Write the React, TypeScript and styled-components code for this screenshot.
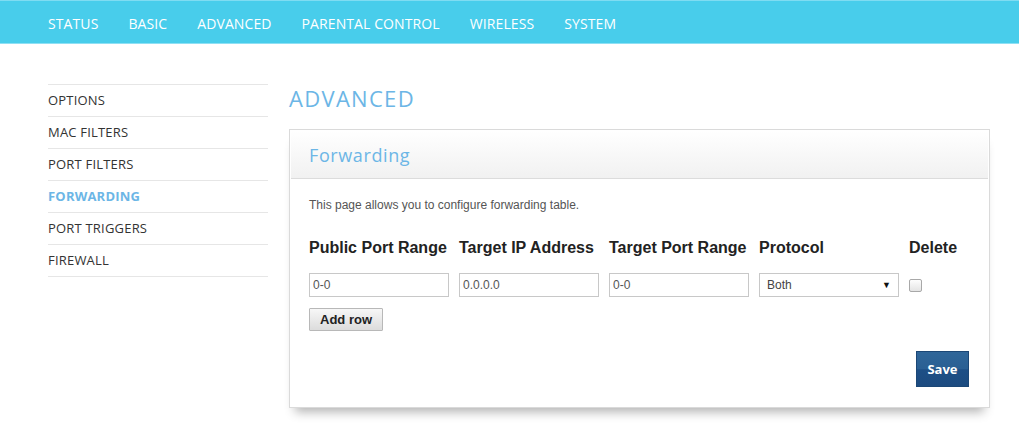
import * as React from "react";
import styled, { createGlobalStyle } from "styled-components";

const GlobalStyle = createGlobalStyle`
  html, body {
    margin: 0;
    padding: 0;
    background: #fff;
  }
  body {
    font-family: "Liberation Sans", Arial, sans-serif;
    color: #333;
    min-height: 447px;
  }
`;

const TopBar = styled.header`
  height: 44px;
  background: #48cdeb;
  border-top: 1px solid #7fdcf2;
  border-bottom: 1px solid #8fe0f4;
  box-sizing: border-box;
  display: flex;
  align-items: center;
  padding-left: 48px;
  gap: 30px;
`;

const NavLink = styled.a`
  font-family: "Open Sans", "Liberation Sans", sans-serif;
  font-size: 14px;
  color: #fff;
  text-decoration: none;
  letter-spacing: 0.1px;
  padding-top: 2px;
`;

const Page = styled.div`
  display: flex;
  padding: 40px 29px 30px 48px;
  gap: 21px;
  align-items: flex-start;
`;

const Sidebar = styled.ul`
  width: 220px;
  flex-shrink: 0;
  list-style: none;
  margin: 0;
  padding: 0;
  border-top: 1px solid #e6e6e6;
`;

const SideItem = styled.li<{ active?: boolean }>`
  box-sizing: border-box;
  height: 32px;
  padding-bottom: 1px;
  border-bottom: 1px solid #e6e6e6;
  display: flex;
  align-items: center;
  font-family: "Open Sans", "Liberation Sans", sans-serif;
  font-size: 13px;
  letter-spacing: 0.2px;
  font-weight: ${({ active }) => (active ? 700 : 400)};
  color: ${({ active }) => (active ? "#6cb6e6" : "#333")};
`;

const Main = styled.main`
  flex: 1;
`;

const Title = styled.h1`
  margin: 0;
  height: 45px;
  font-family: "Open Sans", "Liberation Sans", sans-serif;
  font-weight: 400;
  font-size: 22px;
  letter-spacing: 1.3px;
  line-height: 28px;
  color: #6cb6e6;
`;

const Panel = styled.section`
  position: relative;
  border: 1px solid #dadada;
  background: #fff;
  box-shadow: 0 10px 10px -6px rgba(0, 0, 0, 0.3);
`;

const PanelHead = styled.div`
  margin: 1px 1px 0;
  height: 47px;
  background: linear-gradient(to bottom, #ffffff, #f1f1f1);
  border-bottom: 1px solid #dcdcdc;
  display: flex;
  align-items: center;
  padding-left: 18px;
`;

const PanelTitle = styled.h2`
  margin: 0;
  font-family: "Open Sans", "Liberation Sans", sans-serif;
  font-weight: 400;
  font-size: 18px;
  letter-spacing: 0.6px;
  color: #6cb6e6;
`;

const PanelBody = styled.div`
  padding: 19px 20px 20px 19px;
`;

const Intro = styled.p`
  margin: 0 0 26px;
  font-size: 12px;
  line-height: 15px;
  color: #555;
`;

const Grid = styled.div`
  display: grid;
  grid-template-columns: repeat(4, 140px) auto;
  column-gap: 10px;
  align-items: center;
`;

const ColHead = styled.div`
  font-size: 16px;
  font-weight: 700;
  color: #222;
  height: 34px;
  line-height: 18px;
`;

const TextInput = styled.input`
  box-sizing: border-box;
  width: 140px;
  height: 24px;
  border: 1px solid #c8c8c8;
  padding: 0 3px;
  font-family: "Liberation Sans", Arial, sans-serif;
  font-size: 12px;
  color: #555;
  outline: none;
`;

const SelectBox = styled.div`
  box-sizing: border-box;
  width: 140px;
  height: 24px;
  border: 1px solid #c8c8c8;
  padding: 0 7px;
  display: flex;
  align-items: center;
  justify-content: space-between;
  font-size: 12px;
  color: #444;
`;

const Arrow = styled.span`
  font-size: 9px;
  color: #111;
`;

const Check = styled.span`
  display: inline-block;
  width: 11px;
  height: 11px;
  border: 1px solid #a8a8a8;
  border-radius: 2px;
  background: linear-gradient(to bottom, #fdfdfd, #e4e4e4);
`;

const AddButton = styled.button`
  margin-top: 11px;
  width: 74px;
  height: 23px;
  border: 1px solid #b8b8b8;
  border-radius: 1px;
  background: linear-gradient(to bottom, #f7f7f7, #dcdcdc);
  font-family: "Liberation Sans", Arial, sans-serif;
  font-weight: 700;
  font-size: 13px;
  color: #222;
  padding: 0;
`;

const Actions = styled.div`
  display: flex;
  justify-content: flex-end;
  margin-top: 20px;
`;

const SaveButton = styled.button`
  width: 53px;
  height: 36px;
  border: 1px solid #1b4776;
  background: linear-gradient(to bottom, #2f6699 0%, #2a5f93 50%, #1d4f86 52%, #1c4b80 100%);
  color: #fff;
  font-family: "Open Sans", "Liberation Sans", sans-serif;
  font-weight: 700;
  font-size: 13px;
  padding: 0;
`;

const nav = ["STATUS", "BASIC", "ADVANCED", "PARENTAL CONTROL", "WIRELESS", "SYSTEM"];
const side = ["OPTIONS", "MAC FILTERS", "PORT FILTERS", "FORWARDING", "PORT TRIGGERS", "FIREWALL"];

export default function App() {
  return (
    <>
      <GlobalStyle />
      <TopBar>
        {nav.map((n) => (
          <NavLink key={n}>{n}</NavLink>
        ))}
      </TopBar>
      <Page>
        <Sidebar>
          {side.map((s) => (
            <SideItem key={s} active={s === "FORWARDING"}>
              {s}
            </SideItem>
          ))}
        </Sidebar>
        <Main>
          <Title>ADVANCED</Title>
          <Panel>
            <PanelHead>
              <PanelTitle>Forwarding</PanelTitle>
            </PanelHead>
            <PanelBody>
              <Intro>This page allows you to configure forwarding table.</Intro>
              <Grid>
                <ColHead>Public Port Range</ColHead>
                <ColHead>Target IP Address</ColHead>
                <ColHead>Target Port Range</ColHead>
                <ColHead>Protocol</ColHead>
                <ColHead>Delete</ColHead>
                <TextInput defaultValue="0-0" />
                <TextInput defaultValue="0.0.0.0" />
                <TextInput defaultValue="0-0" />
                <SelectBox>
                  Both <Arrow>▼</Arrow>
                </SelectBox>
                <Check />
              </Grid>
              <AddButton>Add row</AddButton>
              <Actions>
                <SaveButton>Save</SaveButton>
              </Actions>
            </PanelBody>
          </Panel>
        </Main>
      </Page>
    </>
  );
}
